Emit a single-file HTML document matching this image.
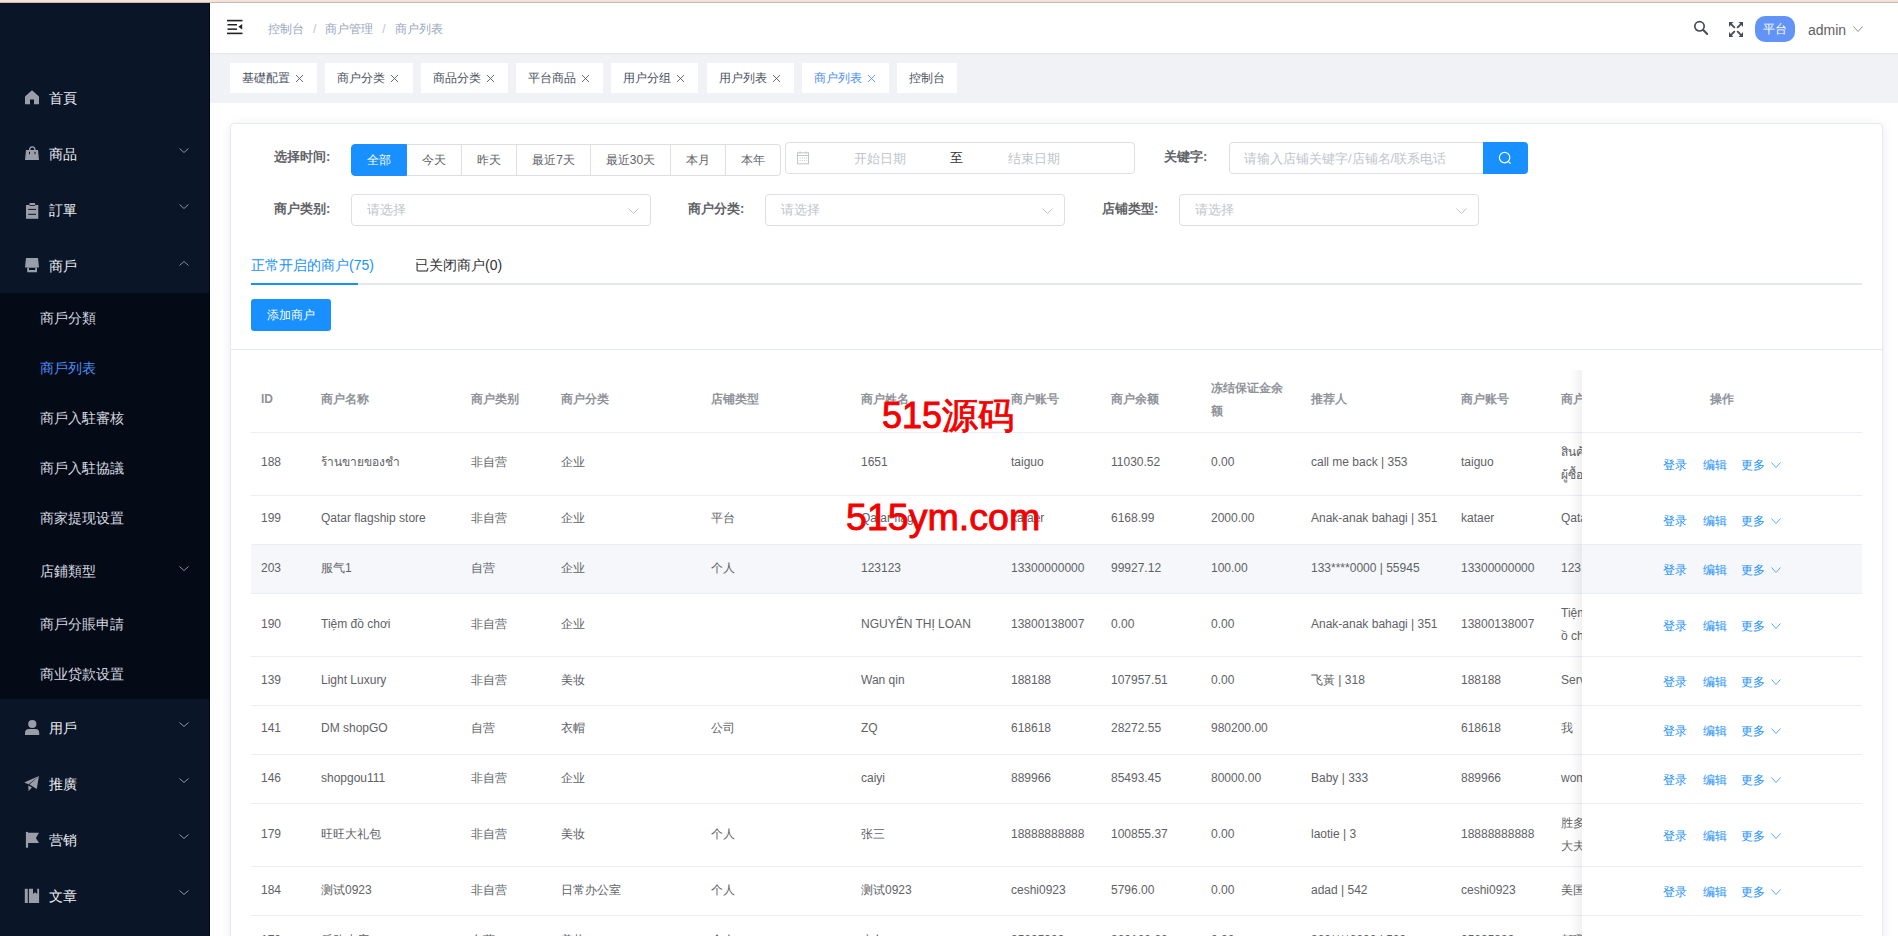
<!DOCTYPE html><html><head><meta charset="utf-8"><style>
*{box-sizing:border-box;margin:0;padding:0}
html,body{width:1898px;height:936px;overflow:hidden;background:#fff;font-family:"Liberation Sans",sans-serif}
body{position:relative}
.a{position:absolute}
.nw{white-space:nowrap}
.t14{font-size:14px}
.mt{position:absolute;left:49px;font-size:14px;color:#eceef2;line-height:20px;white-space:nowrap}
.st{position:absolute;left:40px;font-size:14px;color:#d5d9e0;line-height:20px;white-space:nowrap}
.tag{position:absolute;top:63px;height:30px;background:#fff;font-size:12px;line-height:30px;color:#495060;padding-left:12px;white-space:nowrap}
.lbl{position:absolute;font-size:13px;font-weight:bold;color:#606266;line-height:20px;white-space:nowrap}
.rb{position:absolute;top:144px;height:32px;border:1px solid #dcdfe6;border-left:none;font-size:12px;color:#606266;text-align:center;line-height:30px;white-space:nowrap;background:#fff}
.inp{position:absolute;height:32px;border:1px solid #dcdfe6;border-radius:4px;background:#fff}
.ph{position:absolute;font-size:13px;color:#c0c4cc;line-height:20px;white-space:nowrap}
.th{position:absolute;font-size:12px;font-weight:bold;color:#909399;line-height:23px;white-space:nowrap}
.td{position:absolute;font-size:12px;color:#606266;line-height:23px;white-space:nowrap}
.hl{position:absolute;height:1px;background:#ebeef5}
.lk{position:absolute;font-size:12px;color:#1890ff;line-height:20px;white-space:nowrap}
</style></head><body>
<div class="a" style="left:0;top:0;width:1898px;height:2px;background:#f5e2db"></div>
<div class="a" style="left:0;top:2px;width:1898px;height:1px;background:#c9b7b0"></div>
<div class="a" style="left:0;top:3px;width:210px;height:933px;background:#0b1528"></div>
<div class="a" style="left:209px;top:3px;width:1px;height:933px;background:#000612"></div>
<div class="a" style="left:0;top:293px;width:209px;height:406px;background:#050b16"></div>
<svg class="a" style="left:24px;top:90px" width="16" height="17"><path d="M1 6.4 L8 0.3 L15 6.4 V14.2 H10 V9.6 H6 V14.2 H1 Z" fill="#9a9ea8"/></svg>
<div class="mt" style="top:88px">首頁</div>
<svg class="a" style="left:24px;top:145px" width="16" height="17"><path d="M2 5 H14 L15 15 H1 Z" fill="#9a9ea8"/><path d="M5.6 5 A2.7 3.2 0 0 1 11 5" fill="none" stroke="#9a9ea8" stroke-width="1.3"/><rect x="5" y="6.8" width="1" height="2.4" fill="#0b1528"/><rect x="10.5" y="6.8" width="1" height="2.4" fill="#0b1528"/></svg>
<div class="mt" style="top:144px">商品</div>
<svg class="a" style="left:179px;top:148px" width="10" height="5"><path d="M0.5 0.5 L5.0 4.5 L9.5 0.5" fill="none" stroke="#8791a3" stroke-width="1"/></svg>
<svg class="a" style="left:24px;top:202px" width="16" height="17"><rect x="2" y="3" width="12.3" height="13.8" fill="#9a9ea8"/><rect x="5.5" y="1" width="5.6" height="2.6" fill="#9a9ea8"/><rect x="5.5" y="3" width="5.6" height="0.8" fill="#0b1528"/><rect x="4.2" y="6.9" width="7.8" height="1" fill="#0b1528"/><rect x="4.2" y="11.8" width="7.8" height="1" fill="#0b1528"/></svg>
<div class="mt" style="top:200px">訂單</div>
<svg class="a" style="left:179px;top:204px" width="10" height="5"><path d="M0.5 0.5 L5.0 4.5 L9.5 0.5" fill="none" stroke="#8791a3" stroke-width="1"/></svg>
<svg class="a" style="left:24px;top:257px" width="16" height="17"><path d="M2 1 H14 L15 10.6 H1 Z" fill="#9a9ea8"/><path d="M3.2 10.6 H13 V15.2 H3.2 Z M5 11 V13 H11.2 V11 Z" fill="#9a9ea8" fill-rule="evenodd"/></svg>
<div class="mt" style="top:256px">商戶</div>
<svg class="a" style="left:179px;top:261px" width="10" height="5"><path d="M0.5 4.5 L5.0 0.5 L9.5 4.5" fill="none" stroke="#8791a3" stroke-width="1"/></svg>
<svg class="a" style="left:24px;top:719px" width="16" height="17"><circle cx="8.3" cy="5" r="4.1" fill="#9a9ea8"/><path d="M1 16 V13.8 Q1 10 5 10 H11.6 Q15.2 10 15.2 13.8 V16 Z" fill="#9a9ea8"/></svg>
<div class="mt" style="top:718px">用戶</div>
<svg class="a" style="left:179px;top:722px" width="10" height="5"><path d="M0.5 0.5 L5.0 4.5 L9.5 0.5" fill="none" stroke="#8791a3" stroke-width="1"/></svg>
<svg class="a" style="left:24px;top:775px" width="16" height="17"><path d="M14.9 1 L0.2 7.4 L4.6 9.2 Z" fill="#9a9ea8"/><path d="M14.9 1 L5.4 9.6 L12.8 13.9 Z" fill="#9a9ea8"/><path d="M4.2 10.6 L4.6 16 L8 12.6 Z" fill="#9a9ea8"/></svg>
<div class="mt" style="top:774px">推廣</div>
<svg class="a" style="left:179px;top:778px" width="10" height="5"><path d="M0.5 0.5 L5.0 4.5 L9.5 0.5" fill="none" stroke="#8791a3" stroke-width="1"/></svg>
<svg class="a" style="left:24px;top:831px" width="16" height="17"><rect x="1.9" y="0.9" width="2.2" height="15.8" fill="#9a9ea8"/><path d="M4 1.8 H15 L11.9 6.9 L15 11.9 H4 Z" fill="#9a9ea8"/></svg>
<div class="mt" style="top:830px">营销</div>
<svg class="a" style="left:179px;top:834px" width="10" height="5"><path d="M0.5 0.5 L5.0 4.5 L9.5 0.5" fill="none" stroke="#8791a3" stroke-width="1"/></svg>
<svg class="a" style="left:24px;top:888px" width="16" height="17"><rect x="0.8" y="0.8" width="3" height="14.2" fill="#9a9ea8"/><path d="M4.9 0.8 H9 V6 L11 4.2 L13.2 6 V0.8 H15.1 V15 H4.9 Z" fill="#9a9ea8"/></svg>
<div class="mt" style="top:886px">文章</div>
<svg class="a" style="left:179px;top:890px" width="10" height="5"><path d="M0.5 0.5 L5.0 4.5 L9.5 0.5" fill="none" stroke="#8791a3" stroke-width="1"/></svg>
<div class="st" style="top:308px;color:#d5d9e0">商戶分類</div>
<div class="st" style="top:358px;color:#4d8ef8">商戶列表</div>
<div class="st" style="top:408px;color:#d5d9e0">商戶入駐審核</div>
<div class="st" style="top:458px;color:#d5d9e0">商戶入駐協議</div>
<div class="st" style="top:508px;color:#d5d9e0">商家提现设置</div>
<div class="st" style="top:561px;color:#d5d9e0">店鋪類型</div>
<svg class="a" style="left:179px;top:566px" width="10" height="5"><path d="M0.5 0.5 L5.0 4.5 L9.5 0.5" fill="none" stroke="#8791a3" stroke-width="1"/></svg>
<div class="st" style="top:614px;color:#d5d9e0">商戶分賬申請</div>
<div class="st" style="top:664px;color:#d5d9e0">商业贷款设置</div>
<svg class="a" style="left:226px;top:19px" width="18" height="17"><rect x="1" y="0.8" width="15.5" height="1.6" fill="#222"/><rect x="1.5" y="5" width="9.5" height="1.5" fill="#222"/><rect x="1.5" y="9.4" width="9.5" height="1.5" fill="#222"/><rect x="1" y="13.6" width="15.5" height="1.6" fill="#222"/><path d="M12.3 7.8 L16.2 5 V10.6 Z" fill="#222"/></svg>
<div class="a nw" style="left:268px;top:21px;font-size:12px;line-height:16px;color:#97a8be">控制台<span style="margin:0 9px;color:#c0c4cc">/</span>商户管理<span style="margin:0 9px;color:#c0c4cc">/</span>商户列表</div>
<svg class="a" style="left:1692px;top:19px" width="18" height="18"><circle cx="7.5" cy="7.3" r="4.7" fill="none" stroke="#474d58" stroke-width="1.7"/><path d="M11 10.8 L15.2 15" stroke="#474d58" stroke-width="2" stroke-linecap="round"/></svg>
<svg class="a" style="left:1729px;top:22px" width="14" height="15"><g fill="#474d58"><path d="M0 0 H4.4 L0 4.9 Z"/><path d="M1.6 1.6 L5.8 5.8" stroke="#474d58" stroke-width="1.9"/><path d="M14 0 H9.6 L14 4.9 Z"/><path d="M12.4 1.6 L8.2 5.8" stroke="#474d58" stroke-width="1.9"/><path d="M0 15 H4.4 L0 10.1 Z"/><path d="M1.6 13.4 L5.8 9.2" stroke="#474d58" stroke-width="1.9"/><path d="M14 15 H9.6 L14 10.1 Z"/><path d="M12.4 13.4 L8.2 9.2" stroke="#474d58" stroke-width="1.9"/></g></svg>
<div class="a nw" style="left:1755px;top:16px;width:40px;height:26px;border-radius:10px;background:#6294f7;color:#fff;font-size:12px;line-height:26px;text-align:center">平台</div>
<div class="a nw" style="left:1808px;top:20px;font-size:14px;line-height:20px;color:#5f6166">admin</div>
<svg class="a" style="left:1853px;top:26px" width="10" height="6"><path d="M0.5 0.5 L5.0 5.5 L9.5 0.5" fill="none" stroke="#8d9097" stroke-width="1"/></svg>
<div class="a" style="left:210px;top:53px;width:1688px;height:50px;background:#f0f2f5"></div>
<div class="a" style="left:210px;top:53px;width:1688px;height:2px;background:linear-gradient(#e4e6ea,#f0f2f5)"></div>
<div class="tag" style="left:230px;width:87px;color:#495060">基礎配置<svg class="a" style="left:65px;top:11px" width="9" height="9"><path d="M1 1 L8 8 M8 1 L1 8" stroke="#495060" stroke-width="0.85"/></svg></div>
<div class="tag" style="left:325px;width:88px;color:#495060">商户分类<svg class="a" style="left:65px;top:11px" width="9" height="9"><path d="M1 1 L8 8 M8 1 L1 8" stroke="#495060" stroke-width="0.85"/></svg></div>
<div class="tag" style="left:421px;width:87px;color:#495060">商品分类<svg class="a" style="left:65px;top:11px" width="9" height="9"><path d="M1 1 L8 8 M8 1 L1 8" stroke="#495060" stroke-width="0.85"/></svg></div>
<div class="tag" style="left:516px;width:87px;color:#495060">平台商品<svg class="a" style="left:65px;top:11px" width="9" height="9"><path d="M1 1 L8 8 M8 1 L1 8" stroke="#495060" stroke-width="0.85"/></svg></div>
<div class="tag" style="left:611px;width:87px;color:#495060">用户分组<svg class="a" style="left:65px;top:11px" width="9" height="9"><path d="M1 1 L8 8 M8 1 L1 8" stroke="#495060" stroke-width="0.85"/></svg></div>
<div class="tag" style="left:707px;width:87px;color:#495060">用户列表<svg class="a" style="left:65px;top:11px" width="9" height="9"><path d="M1 1 L8 8 M8 1 L1 8" stroke="#495060" stroke-width="0.85"/></svg></div>
<div class="tag" style="left:802px;width:87px;color:#4b8ef5">商户列表<svg class="a" style="left:65px;top:11px" width="9" height="9"><path d="M1 1 L8 8 M8 1 L1 8" stroke="#4b8ef5" stroke-width="0.85"/></svg></div>
<div class="tag" style="left:897px;width:60px;color:#495060">控制台</div>
<div class="a" style="left:230px;top:123px;width:1653px;height:900px;border:1px solid #e4e9f3;border-radius:4px;background:#fff;box-shadow:0 2px 12px rgba(0,0,0,.08)"></div>
<div class="a" style="left:231px;top:349px;width:1651px;height:1px;background:#e4e9f3"></div>
<div class="lbl" style="left:274px;top:147px">选择时间:</div>
<div class="rb" style="left:351px;width:56px;background:#1890ff;border-color:#1890ff;color:#fff;border-left:1px solid #1890ff;border-radius:4px 0 0 4px;">全部</div>
<div class="rb" style="left:407px;width:55px;">今天</div>
<div class="rb" style="left:462px;width:55px;">昨天</div>
<div class="rb" style="left:517px;width:74px;">最近7天</div>
<div class="rb" style="left:591px;width:80px;">最近30天</div>
<div class="rb" style="left:671px;width:55px;">本月</div>
<div class="rb" style="left:726px;width:55px;border-radius:0 4px 4px 0;">本年</div>
<div class="inp" style="left:785px;top:142px;width:350px"></div>
<svg class="a" style="left:796px;top:151px" width="14" height="14"><rect x="1.5" y="1.8" width="11" height="11" fill="none" stroke="#c0c4cc" stroke-width="1"/><path d="M1.5 4.5 H12.5" stroke="#c0c4cc" stroke-width="1"/><path d="M4 0.5 V2.5 M10 0.5 V2.5" stroke="#c0c4cc"/><path d="M3.5 7 H11 M3.5 9.5 H11" stroke="#c0c4cc" stroke-width="0.8" stroke-dasharray="1.2 1"/></svg>
<div class="ph" style="left:854px;top:149px">开始日期</div>
<div class="a nw" style="left:950px;top:148px;font-size:13px;line-height:20px;color:#303133">至</div>
<div class="ph" style="left:1008px;top:149px">结束日期</div>
<div class="lbl" style="left:1164px;top:147px">关键字:</div>
<div class="inp" style="left:1229px;top:142px;width:256px;border-radius:4px 0 0 4px"></div>
<div class="ph" style="left:1244px;top:149px">请输入店铺关键字/店铺名/联系电话</div>
<div class="a" style="left:1483px;top:142px;width:45px;height:32px;background:#1890ff;border-radius:0 4px 4px 0"></div>
<svg class="a" style="left:1497px;top:150px" width="16" height="16"><circle cx="7.6" cy="7.6" r="5.2" fill="none" stroke="#fff" stroke-width="1.2"/><path d="M11.5 11.6 L13.6 13.7" stroke="#fff" stroke-width="1.2"/></svg>
<div class="lbl" style="left:274px;top:199px">商户类别:</div>
<div class="inp" style="left:351px;top:194px;width:300px"></div>
<div class="ph" style="left:367px;top:200px">请选择</div>
<svg class="a" style="left:628px;top:208px" width="11" height="6"><path d="M0.5 0.5 L5.5 5.5 L10.5 0.5" fill="none" stroke="#bfc3ca" stroke-width="1"/></svg>
<div class="lbl" style="left:688px;top:199px">商户分类:</div>
<div class="inp" style="left:765px;top:194px;width:300px"></div>
<div class="ph" style="left:781px;top:200px">请选择</div>
<svg class="a" style="left:1042px;top:208px" width="11" height="6"><path d="M0.5 0.5 L5.5 5.5 L10.5 0.5" fill="none" stroke="#bfc3ca" stroke-width="1"/></svg>
<div class="lbl" style="left:1102px;top:199px">店铺类型:</div>
<div class="inp" style="left:1179px;top:194px;width:300px"></div>
<div class="ph" style="left:1195px;top:200px">请选择</div>
<svg class="a" style="left:1456px;top:208px" width="11" height="6"><path d="M0.5 0.5 L5.5 5.5 L10.5 0.5" fill="none" stroke="#bfc3ca" stroke-width="1"/></svg>
<div class="a nw" style="left:251px;top:255px;font-size:14px;line-height:20px;color:#1890ff">正常开启的商户(75)</div>
<div class="a nw" style="left:415px;top:255px;font-size:14px;line-height:20px;color:#303133">已关闭商户(0)</div>
<div class="a" style="left:251px;top:283px;width:1611px;height:2px;background:#e4e7ed"></div>
<div class="a" style="left:251px;top:283px;width:107px;height:2px;background:#1890ff"></div>
<div class="a nw" style="left:251px;top:299px;width:80px;height:32px;background:#1890ff;border-radius:3px;color:#fff;font-size:12px;line-height:32px;text-align:center">添加商户</div>
<div class="th" style="left:261px;top:388px">ID</div>
<div class="th" style="left:321px;top:388px">商户名称</div>
<div class="th" style="left:471px;top:388px">商户类别</div>
<div class="th" style="left:561px;top:388px">商户分类</div>
<div class="th" style="left:711px;top:388px">店铺类型</div>
<div class="th" style="left:861px;top:388px">商户姓名</div>
<div class="th" style="left:1011px;top:388px">商户账号</div>
<div class="th" style="left:1111px;top:388px">商户余额</div>
<div class="th" style="left:1211px;top:377px">冻结保证金余<br>额</div>
<div class="th" style="left:1311px;top:388px">推荐人</div>
<div class="th" style="left:1461px;top:388px">商户账号</div>
<div class="th" style="left:1561px;top:388px">商户</div>
<div class="hl" style="left:251px;top:432px;width:1611px"></div>
<div class="td" style="left:261px;top:451px">188</div>
<div class="td" style="left:321px;top:451px">ร้านขายของชำ</div>
<div class="td" style="left:471px;top:451px">非自营</div>
<div class="td" style="left:561px;top:451px">企业</div>
<div class="td" style="left:861px;top:451px">1651</div>
<div class="td" style="left:1011px;top:451px">taiguo</div>
<div class="td" style="left:1111px;top:451px">11030.52</div>
<div class="td" style="left:1211px;top:451px">0.00</div>
<div class="td" style="left:1311px;top:451px">call me back | 353</div>
<div class="td" style="left:1461px;top:451px">taiguo</div>
<div class="td" style="left:1561px;top:441px">สินค้<br>ผู้ซื้อ</div>
<div class="hl" style="left:251px;top:495px;width:1611px"></div>
<div class="td" style="left:261px;top:507px">199</div>
<div class="td" style="left:321px;top:507px">Qatar flagship store</div>
<div class="td" style="left:471px;top:507px">非自营</div>
<div class="td" style="left:561px;top:507px">企业</div>
<div class="td" style="left:711px;top:507px">平台</div>
<div class="td" style="left:861px;top:507px">Qatar flag</div>
<div class="td" style="left:1011px;top:507px">kataer</div>
<div class="td" style="left:1111px;top:507px">6168.99</div>
<div class="td" style="left:1211px;top:507px">2000.00</div>
<div class="td" style="left:1311px;top:507px">Anak-anak bahagi | 351</div>
<div class="td" style="left:1461px;top:507px">kataer</div>
<div class="td" style="left:1561px;top:507px">Qatar</div>
<div class="hl" style="left:251px;top:544px;width:1611px"></div>
<div class="a" style="left:251px;top:545px;width:1611px;height:48px;background:#f5f7fa"></div>
<div class="td" style="left:261px;top:557px">203</div>
<div class="td" style="left:321px;top:557px">服气1</div>
<div class="td" style="left:471px;top:557px">自营</div>
<div class="td" style="left:561px;top:557px">企业</div>
<div class="td" style="left:711px;top:557px">个人</div>
<div class="td" style="left:861px;top:557px">123123</div>
<div class="td" style="left:1011px;top:557px">13300000000</div>
<div class="td" style="left:1111px;top:557px">99927.12</div>
<div class="td" style="left:1211px;top:557px">100.00</div>
<div class="td" style="left:1311px;top:557px">133****0000 | 55945</div>
<div class="td" style="left:1461px;top:557px">13300000000</div>
<div class="td" style="left:1561px;top:557px">123</div>
<div class="hl" style="left:251px;top:593px;width:1611px"></div>
<div class="td" style="left:261px;top:613px">190</div>
<div class="td" style="left:321px;top:613px">Tiệm đồ chơi</div>
<div class="td" style="left:471px;top:613px">非自营</div>
<div class="td" style="left:561px;top:613px">企业</div>
<div class="td" style="left:861px;top:613px">NGUYỄN THỊ LOAN</div>
<div class="td" style="left:1011px;top:613px">13800138007</div>
<div class="td" style="left:1111px;top:613px">0.00</div>
<div class="td" style="left:1211px;top:613px">0.00</div>
<div class="td" style="left:1311px;top:613px">Anak-anak bahagi | 351</div>
<div class="td" style="left:1461px;top:613px">13800138007</div>
<div class="td" style="left:1561px;top:602px">Tiệm đ<br>ồ chơi</div>
<div class="hl" style="left:251px;top:656px;width:1611px"></div>
<div class="td" style="left:261px;top:669px">139</div>
<div class="td" style="left:321px;top:669px">Light Luxury</div>
<div class="td" style="left:471px;top:669px">非自营</div>
<div class="td" style="left:561px;top:669px">美妆</div>
<div class="td" style="left:861px;top:669px">Wan qin</div>
<div class="td" style="left:1011px;top:669px">188188</div>
<div class="td" style="left:1111px;top:669px">107957.51</div>
<div class="td" style="left:1211px;top:669px">0.00</div>
<div class="td" style="left:1311px;top:669px">飞黃 | 318</div>
<div class="td" style="left:1461px;top:669px">188188</div>
<div class="td" style="left:1561px;top:669px">Serv</div>
<div class="hl" style="left:251px;top:705px;width:1611px"></div>
<div class="td" style="left:261px;top:717px">141</div>
<div class="td" style="left:321px;top:717px">DM shopGO</div>
<div class="td" style="left:471px;top:717px">自营</div>
<div class="td" style="left:561px;top:717px">衣帽</div>
<div class="td" style="left:711px;top:717px">公司</div>
<div class="td" style="left:861px;top:717px">ZQ</div>
<div class="td" style="left:1011px;top:717px">618618</div>
<div class="td" style="left:1111px;top:717px">28272.55</div>
<div class="td" style="left:1211px;top:717px">980200.00</div>
<div class="td" style="left:1461px;top:717px">618618</div>
<div class="td" style="left:1561px;top:717px">我</div>
<div class="hl" style="left:251px;top:754px;width:1611px"></div>
<div class="td" style="left:261px;top:767px">146</div>
<div class="td" style="left:321px;top:767px">shopgou111</div>
<div class="td" style="left:471px;top:767px">非自营</div>
<div class="td" style="left:561px;top:767px">企业</div>
<div class="td" style="left:861px;top:767px">caiyi</div>
<div class="td" style="left:1011px;top:767px">889966</div>
<div class="td" style="left:1111px;top:767px">85493.45</div>
<div class="td" style="left:1211px;top:767px">80000.00</div>
<div class="td" style="left:1311px;top:767px">Baby | 333</div>
<div class="td" style="left:1461px;top:767px">889966</div>
<div class="td" style="left:1561px;top:767px">wom</div>
<div class="hl" style="left:251px;top:803px;width:1611px"></div>
<div class="td" style="left:261px;top:823px">179</div>
<div class="td" style="left:321px;top:823px">旺旺大礼包</div>
<div class="td" style="left:471px;top:823px">非自营</div>
<div class="td" style="left:561px;top:823px">美妆</div>
<div class="td" style="left:711px;top:823px">个人</div>
<div class="td" style="left:861px;top:823px">张三</div>
<div class="td" style="left:1011px;top:823px">18888888888</div>
<div class="td" style="left:1111px;top:823px">100855.37</div>
<div class="td" style="left:1211px;top:823px">0.00</div>
<div class="td" style="left:1311px;top:823px">laotie | 3</div>
<div class="td" style="left:1461px;top:823px">18888888888</div>
<div class="td" style="left:1561px;top:812px">胜多<br>大夫</div>
<div class="hl" style="left:251px;top:866px;width:1611px"></div>
<div class="td" style="left:261px;top:879px">184</div>
<div class="td" style="left:321px;top:879px">测试0923</div>
<div class="td" style="left:471px;top:879px">非自营</div>
<div class="td" style="left:561px;top:879px">日常办公室</div>
<div class="td" style="left:711px;top:879px">个人</div>
<div class="td" style="left:861px;top:879px">测试0923</div>
<div class="td" style="left:1011px;top:879px">ceshi0923</div>
<div class="td" style="left:1111px;top:879px">5796.00</div>
<div class="td" style="left:1211px;top:879px">0.00</div>
<div class="td" style="left:1311px;top:879px">adad | 542</div>
<div class="td" style="left:1461px;top:879px">ceshi0923</div>
<div class="td" style="left:1561px;top:879px">美国</div>
<div class="hl" style="left:251px;top:915px;width:1611px"></div>
<div class="td" style="left:261px;top:929px">170</div>
<div class="td" style="left:321px;top:929px">乐购小店</div>
<div class="td" style="left:471px;top:929px">自营</div>
<div class="td" style="left:561px;top:929px">美妆</div>
<div class="td" style="left:711px;top:929px">个人</div>
<div class="td" style="left:861px;top:929px">小乞</div>
<div class="td" style="left:1011px;top:929px">95295393</div>
<div class="td" style="left:1111px;top:929px">300100.00</div>
<div class="td" style="left:1211px;top:929px">0.00</div>
<div class="td" style="left:1311px;top:929px">300****0000 | 523</div>
<div class="td" style="left:1461px;top:929px">95295393</div>
<div class="td" style="left:1561px;top:929px">都哪</div>
<div class="hl" style="left:251px;top:965px;width:1611px"></div>
<div class="a" style="left:1570px;top:370px;width:12px;height:566px;background:linear-gradient(to right,rgba(0,0,0,0),rgba(0,0,0,.055))"></div>
<div class="a" style="left:1582px;top:370px;width:280px;height:566px;background:#fff"></div>
<div class="th" style="left:1710px;top:388px">操作</div>
<div class="hl" style="left:1582px;top:432px;width:280px"></div>
<div class="lk" style="left:1663px;top:455px">登录</div>
<div class="lk" style="left:1703px;top:455px">编辑</div>
<div class="lk" style="left:1741px;top:455px">更多</div>
<svg class="a" style="left:1771px;top:462px" width="10" height="6"><path d="M0.5 0.5 L5.0 5.5 L9.5 0.5" fill="none" stroke="#5aa9ff" stroke-width="1"/></svg>
<div class="hl" style="left:1582px;top:495px;width:280px"></div>
<div class="lk" style="left:1663px;top:511px">登录</div>
<div class="lk" style="left:1703px;top:511px">编辑</div>
<div class="lk" style="left:1741px;top:511px">更多</div>
<svg class="a" style="left:1771px;top:518px" width="10" height="6"><path d="M0.5 0.5 L5.0 5.5 L9.5 0.5" fill="none" stroke="#5aa9ff" stroke-width="1"/></svg>
<div class="hl" style="left:1582px;top:544px;width:280px"></div>
<div class="a" style="left:1582px;top:545px;width:280px;height:48px;background:#f5f7fa"></div>
<div class="lk" style="left:1663px;top:560px">登录</div>
<div class="lk" style="left:1703px;top:560px">编辑</div>
<div class="lk" style="left:1741px;top:560px">更多</div>
<svg class="a" style="left:1771px;top:567px" width="10" height="6"><path d="M0.5 0.5 L5.0 5.5 L9.5 0.5" fill="none" stroke="#5aa9ff" stroke-width="1"/></svg>
<div class="hl" style="left:1582px;top:593px;width:280px"></div>
<div class="lk" style="left:1663px;top:616px">登录</div>
<div class="lk" style="left:1703px;top:616px">编辑</div>
<div class="lk" style="left:1741px;top:616px">更多</div>
<svg class="a" style="left:1771px;top:623px" width="10" height="6"><path d="M0.5 0.5 L5.0 5.5 L9.5 0.5" fill="none" stroke="#5aa9ff" stroke-width="1"/></svg>
<div class="hl" style="left:1582px;top:656px;width:280px"></div>
<div class="lk" style="left:1663px;top:672px">登录</div>
<div class="lk" style="left:1703px;top:672px">编辑</div>
<div class="lk" style="left:1741px;top:672px">更多</div>
<svg class="a" style="left:1771px;top:679px" width="10" height="6"><path d="M0.5 0.5 L5.0 5.5 L9.5 0.5" fill="none" stroke="#5aa9ff" stroke-width="1"/></svg>
<div class="hl" style="left:1582px;top:705px;width:280px"></div>
<div class="lk" style="left:1663px;top:721px">登录</div>
<div class="lk" style="left:1703px;top:721px">编辑</div>
<div class="lk" style="left:1741px;top:721px">更多</div>
<svg class="a" style="left:1771px;top:728px" width="10" height="6"><path d="M0.5 0.5 L5.0 5.5 L9.5 0.5" fill="none" stroke="#5aa9ff" stroke-width="1"/></svg>
<div class="hl" style="left:1582px;top:754px;width:280px"></div>
<div class="lk" style="left:1663px;top:770px">登录</div>
<div class="lk" style="left:1703px;top:770px">编辑</div>
<div class="lk" style="left:1741px;top:770px">更多</div>
<svg class="a" style="left:1771px;top:777px" width="10" height="6"><path d="M0.5 0.5 L5.0 5.5 L9.5 0.5" fill="none" stroke="#5aa9ff" stroke-width="1"/></svg>
<div class="hl" style="left:1582px;top:803px;width:280px"></div>
<div class="lk" style="left:1663px;top:826px">登录</div>
<div class="lk" style="left:1703px;top:826px">编辑</div>
<div class="lk" style="left:1741px;top:826px">更多</div>
<svg class="a" style="left:1771px;top:833px" width="10" height="6"><path d="M0.5 0.5 L5.0 5.5 L9.5 0.5" fill="none" stroke="#5aa9ff" stroke-width="1"/></svg>
<div class="hl" style="left:1582px;top:866px;width:280px"></div>
<div class="lk" style="left:1663px;top:882px">登录</div>
<div class="lk" style="left:1703px;top:882px">编辑</div>
<div class="lk" style="left:1741px;top:882px">更多</div>
<svg class="a" style="left:1771px;top:889px" width="10" height="6"><path d="M0.5 0.5 L5.0 5.5 L9.5 0.5" fill="none" stroke="#5aa9ff" stroke-width="1"/></svg>
<div class="hl" style="left:1582px;top:915px;width:280px"></div>
<div class="lk" style="left:1663px;top:932px">登录</div>
<div class="lk" style="left:1703px;top:932px">编辑</div>
<div class="lk" style="left:1741px;top:932px">更多</div>
<svg class="a" style="left:1771px;top:939px" width="10" height="6"><path d="M0.5 0.5 L5.0 5.5 L9.5 0.5" fill="none" stroke="#5aa9ff" stroke-width="1"/></svg>
<div class="hl" style="left:1582px;top:965px;width:280px"></div>
<div class="a nw" style="left:882px;top:391px;font-size:36px;line-height:50px;color:#f30000;-webkit-text-stroke:0.9px #f30000">515源码</div>
<div class="a nw" style="left:846px;top:492px;font-size:37.6px;line-height:50px;color:#f30000;-webkit-text-stroke:0.9px #f30000">515ym.com</div>
</body></html>
